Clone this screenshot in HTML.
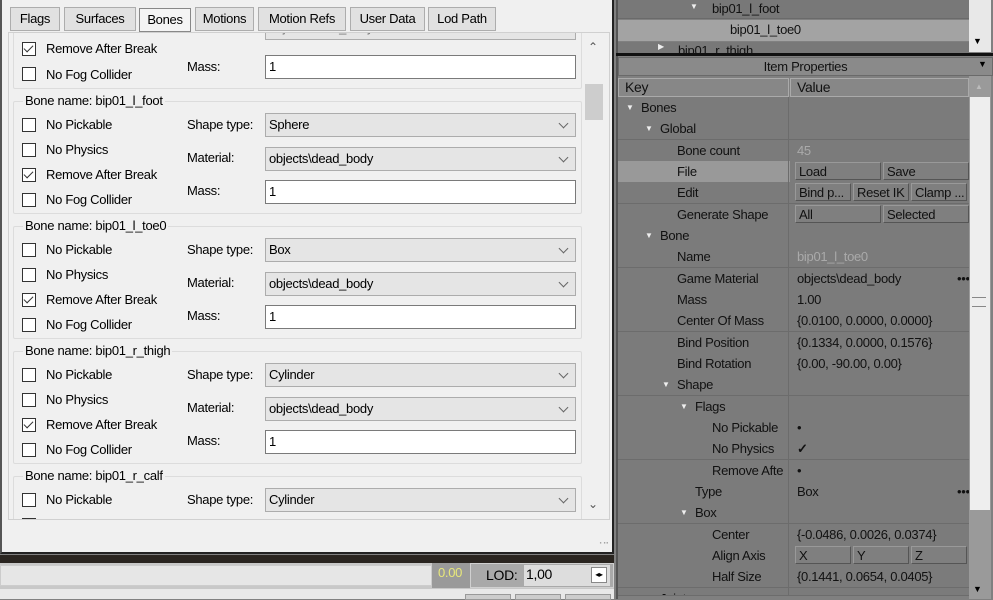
<!DOCTYPE html>
<html><head><meta charset="utf-8"><style>
*{box-sizing:border-box;margin:0;padding:0}
body{width:993px;height:599px;overflow:hidden;background:#808080;font-family:"Liberation Sans",sans-serif;font-size:13px;color:#000;position:relative;letter-spacing:-0.3px}
.a{position:absolute;white-space:nowrap}
.tab{position:absolute;top:7px;height:24px;border:1px solid #adadad;background:#e1e1e1;font-size:13px;line-height:22px;text-align:center}
.cb{position:absolute;width:14px;height:14px;border:1px solid #333;background:#fff}
.cb.c::after{content:"";position:absolute;left:3px;top:0px;width:4px;height:8px;border:solid #333;border-width:0 1.5px 1.5px 0;transform:rotate(45deg)}
.combo{position:absolute;left:264px;width:311px;height:24px;background:#e5e5e5;border:1px solid #acacac;line-height:22px;padding-left:3px}
.combo::after{content:"";position:absolute;right:8px;top:6px;width:6px;height:6px;border:solid #666;border-width:0 1px 1px 0;transform:rotate(45deg)}
.inp{position:absolute;left:264px;width:311px;height:24px;background:#fff;border:1px solid #7a7a7a;line-height:22px;padding-left:3px}
.grp{position:absolute;left:12px;width:569px;border:1px solid #dcdcdc;border-radius:2px}
.gl{position:absolute;left:22px;background:#f0f0f0;padding:0 2px}
.row{position:absolute;left:618px;width:351px;height:21px;border-bottom:1px solid #6c6c6c;background:#7b7b7b;color:#111;line-height:21px}
.row .k{position:absolute;left:0;width:171px;height:21px;border-right:1px solid #6c6c6c}
.tri{font-size:8px;color:#eee;position:absolute}
.btn{position:absolute;top:1px;height:18px;border:1px solid #999;border-right-color:#555;border-bottom-color:#555;background:#7f7f7f;line-height:17px;padding-left:3px}
</style></head><body>
<div class="a" style="left:0;top:0;width:614px;height:554px;background:#f0f0f0;border-right:2px solid #222;border-bottom:2px solid #222;border-left:2px solid #555"></div>
<div class="tab" style="left:10px;width:50px">Flags</div>
<div class="tab" style="left:64px;width:72px">Surfaces</div>
<div class="tab" style="left:139px;width:52px;top:8px;background:#f4f4f4;border-color:#888">Bones</div>
<div class="tab" style="left:195px;width:59px">Motions</div>
<div class="tab" style="left:258px;width:88px">Motion Refs</div>
<div class="tab" style="left:350px;width:75px">User Data</div>
<div class="tab" style="left:428px;width:68px">Lod Path</div>
<div class="a" style="left:8px;top:32px;width:602px;height:488px;border:1px solid #d0d0d0;overflow:hidden">
<div class="a" style="left:-8px;top:-32px;width:620px;height:560px">
<div class="grp" style="top:10px;height:78px"></div>
<div class="combo" style="top:15px;color:#777">objects\dead_body</div>
<div class="cb c" style="left:21px;top:41px"></div><div class="a" style="left:45px;top:40px">Remove After Break</div>
<div class="cb" style="left:21px;top:66px"></div><div class="a" style="left:45px;top:66px">No Fog Collider</div>
<div class="a" style="left:186px;top:58px">Mass:</div><div class="inp" style="top:54px">1</div>
<div id="g"></div>
</div></div>
<div class="a" style="left:583px;top:34px;width:24px;height:485px;background:#f0f0f0"></div>
<div class="a" style="left:588px;top:40px;color:#555;font-size:12px">&#8963;</div>
<div class="a" style="left:585px;top:84px;width:18px;height:36px;background:#cdcdcd"></div>
<div class="a" style="left:588px;top:497px;color:#555;font-size:12px">&#8964;</div>
<div class="a" style="left:596px;top:536px;color:#999;font-size:9px;letter-spacing:0">⠠⠤</div>
<div class="a" style="left:0;top:555px;width:614px;height:8px;background:#2a2520"></div>
<div class="a" style="left:0;top:563px;width:614px;height:36px;background:#c8c8c8"></div>
<div class="a" style="left:0;top:565px;width:432px;height:21px;background:#e6e6e6;border:1px solid #ccc"></div>
<div class="a" style="left:432px;top:563px;width:38px;height:25px;background:#9a9a9a;color:#e8e87a;padding:2px 0 0 6px">0.00</div>
<div class="a" style="left:470px;top:563px;width:144px;height:25px;background:#a9a9a9;border:1px solid #d0d0d0"></div>
<div class="a" style="left:486px;top:567px;font-size:14px">LOD:</div>
<div class="a" style="left:524px;top:565px;width:86px;height:21px;background:#ddd;padding:1px 0 0 2px;font-size:14px">1,00</div>
<div class="a" style="left:591px;top:567px;width:16px;height:16px;background:#fff;border:1px solid #888;font-size:8px;text-align:center;line-height:14px">◂▸</div>
<div class="a" style="left:0;top:589px;width:614px;height:10px;background:#e8e8e8"></div>
<div class="a" style="left:465px;top:594px;width:46px;height:6px;background:#ccc;border:1px solid #999"></div>
<div class="a" style="left:515px;top:594px;width:46px;height:6px;background:#ccc;border:1px solid #999"></div>
<div class="a" style="left:565px;top:594px;width:46px;height:6px;background:#ccc;border:1px solid #999"></div>
<div class="a" style="left:616px;top:0;width:377px;height:599px;background:#808080;border-left:2px solid #555"></div>
<div class="a" style="left:618px;top:0;width:351px;height:19px;background:#787878;border-bottom:1px solid #6a6a6a"></div>
<div class="a" style="left:690px;top:2px;font-size:8px;color:#eee">▼</div><div class="a" style="left:712px;top:1px;color:#111">bip01_l_foot</div>
<div class="a" style="left:618px;top:20px;width:351px;height:21px;background:#a3a3a3"></div>
<div class="a" style="left:730px;top:22px;color:#111">bip01_l_toe0</div>
<div class="a" style="left:618px;top:42px;width:351px;height:12px;background:#787878;overflow:hidden"><span class="a" style="left:40px;top:0px;font-size:8px;color:#eee">▶</span><span class="a" style="left:60px;top:1px;color:#111">bip01_r_thigh</span></div>
<div class="a" style="left:969px;top:0;width:22px;height:52px;background:#e8e8e8"></div>
<div class="a" style="left:973px;top:36px;font-size:9px">▼</div>
<div class="a" style="left:616px;top:53px;width:377px;height:3px;background:#111"></div>
<div class="a" style="left:618px;top:57px;width:375px;height:19px;background:#8a8a8a;border:1px solid #6a6a6a;text-align:center;line-height:17px;color:#111">Item Properties</div>
<div class="a" style="left:978px;top:59px;font-size:9px">▼</div>
<div class="a" style="left:618px;top:78px;width:171px;height:19px;background:#878787;border:1px solid #aaa;padding-left:6px;line-height:17px;font-size:14px;color:#111">Key</div>
<div class="a" style="left:790px;top:78px;width:179px;height:19px;background:#878787;border:1px solid #aaa;padding-left:6px;line-height:17px;font-size:14px;color:#111">Value</div>
<div class="a" style="left:969px;top:76px;width:22px;height:523px;background:#9a9a9a"></div>
<div class="a" style="left:970px;top:97px;width:20px;height:413px;background:#eeeeee"></div>
<div class="a" style="left:972px;top:297px;width:14px;height:10px;border-top:1px solid #888;border-bottom:1px solid #888"></div>
<div class="a" style="left:975px;top:82px;font-size:8px;color:#bbb">▲</div>
<div class="a" style="left:973px;top:584px;font-size:9px">▼</div>
<div id="r"></div>
<script>
var g=document.getElementById('g'),h='';
var gs=[['bip01_l_foot','Sphere',[0,0,1,0]],['bip01_l_toe0','Box',[0,0,1,0]],['bip01_r_thigh','Cylinder',[0,0,1,0]],['bip01_r_calf','Cylinder',[0,0,1,0]]];
var names=['No Pickable','No Physics','Remove After Break','No Fog Collider'];
gs.forEach(function(d,i){var t=100+125*i;
h+='<div class="grp" style="top:'+t+'px;height:113px"></div><div class="a gl" style="top:'+(t-8)+'px">Bone name: '+d[0]+'</div>';
for(var j=0;j<4;j++){var y=t+24+25*j;h+='<div class="cb'+(d[2][j]?' c':'')+'" style="left:21px;top:'+(y-7)+'px"></div><div class="a" style="left:45px;top:'+(y-8)+'px">'+names[j]+'</div>';}
h+='<div class="a" style="left:186px;top:'+(t+16)+'px">Shape type:</div><div class="combo" style="top:'+(t+12)+'px">'+d[1]+'</div>';
h+='<div class="a" style="left:186px;top:'+(t+49)+'px">Material:</div><div class="combo" style="top:'+(t+46)+'px">objects\\dead_body</div>';
h+='<div class="a" style="left:186px;top:'+(t+82)+'px">Mass:</div><div class="inp" style="top:'+(t+79)+'px">1</div>';});
g.outerHTML=h;
var rows=[[0,1,'Bones',''],[1,1,'Global',''],[2,0,'Bone count','<span style="color:#aaa">45</span>'],[2,0,'File','B:Load|Save','sel'],[2,0,'Edit','B:Bind p...|Reset IK|Clamp ...'],[2,0,'Generate Shape','B:All|Selected'],[1,1,'Bone',''],[2,0,'Name','<span style="color:#aaa">bip01_l_toe0</span>'],[2,0,'Game Material','objects\\dead_body<span class="a" style="left:160px">•••</span>'],[2,0,'Mass','1.00'],[2,0,'Center Of Mass','{0.0100, 0.0000, 0.0000}'],[2,0,'Bind Position','{0.1334, 0.0000, 0.1576}'],[2,0,'Bind Rotation','{0.00, -90.00, 0.00}'],[2,1,'Shape',''],[3,1,'Flags',''],[4,0,'No Pickable','•'],[4,0,'No Physics','<b>✓</b>'],[4,0,'Remove Afte','•'],[3,0,'Type','Box<span class="a" style="left:160px">•••</span>'],[3,1,'Box',''],[4,0,'Center','{-0.0486, 0.0026, 0.0374}'],[4,0,'Align Axis','B:X|Y|Z'],[4,0,'Half Size','{0.1441, 0.0654, 0.0405}'],[1,1,'Joint','']];
var ind=[23,42,59,77,94],h2='';
rows.forEach(function(r,i){var t=Math.round(97+21.33*i);var v=r[3];
if(v.indexOf('B:')==0){var p=v.slice(2).split('|'),w=p.length==2?88:58;v='';p.forEach(function(s,k){v+='<div class="btn" style="left:'+(k*w-2)+'px;width:'+(w-2)+'px">'+s+'</div>';});v='<div class="a" style="left:0;top:0;width:180px;height:21px">'+v+'</div>';}
h2+='<div class="row" style="top:'+t+'px;height:'+(i==rows.length-1?8:22)+'px;overflow:hidden'+(r[4]?';background:#999':'')+'"><div class="k"></div>'+(r[1]?'<span class="tri" style="left:'+(ind[r[0]]-15)+'px;top:0">▼</span>':'')+'<span class="a" style="left:'+ind[r[0]]+'px;top:0">'+r[2]+'</span><div class="a" style="left:172px;top:0;width:179px;height:21px;'+(r[4]?'background:#7b7b7b':'')+'"><span class="a" style="left:7px;top:0">'+v+'</span></div></div>';});
document.getElementById('r').outerHTML=h2;
</script>
</body></html>
